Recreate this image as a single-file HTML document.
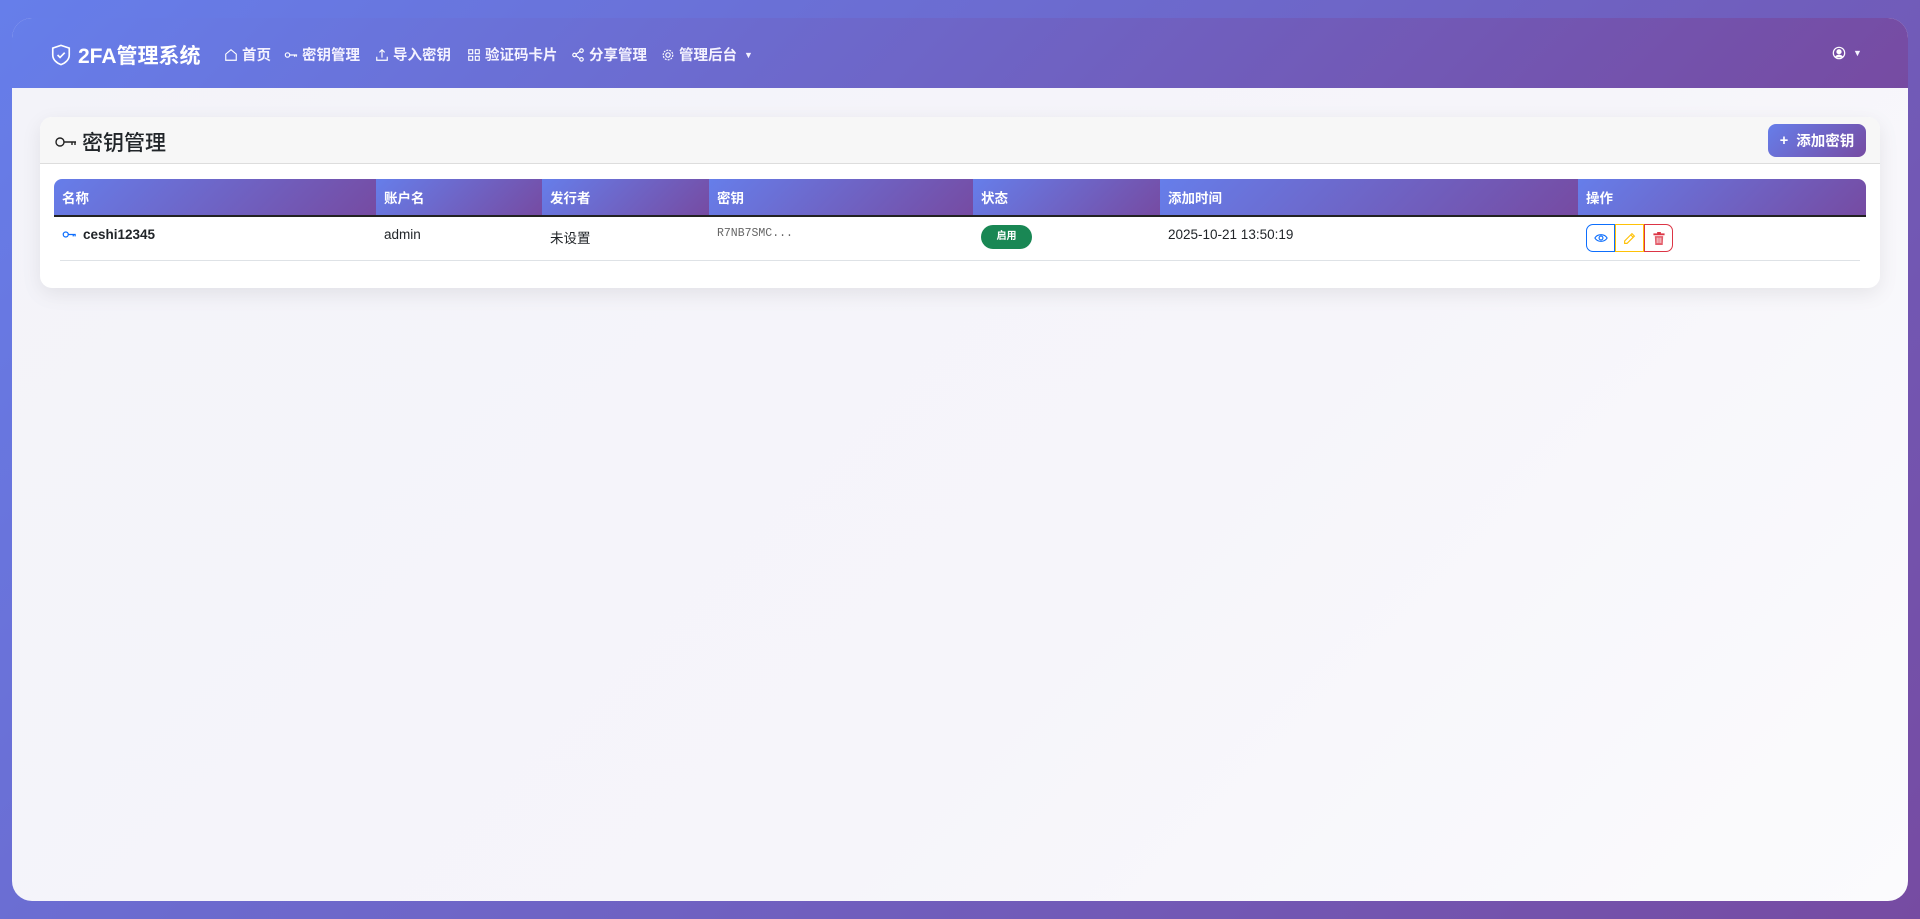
<!DOCTYPE html>
<html><head><meta charset="utf-8"><style>
*{box-sizing:border-box;margin:0;padding:0}
body{width:1920px;height:919px;overflow:hidden;background:linear-gradient(135deg,#667eea,#764ba2);font-family:"Liberation Sans","Noto Sans CJK SC",sans-serif;color:#212529}
.wrap{position:absolute;left:12px;top:18px;width:1896px;height:883px;border-radius:20px;overflow:hidden;background:linear-gradient(135deg,#f3f3f9,#f6f5fa 60%,#fbfbfd)}
.nav{height:70px;background:linear-gradient(135deg,#667eea,#764ba2);position:relative;color:#fff}
.brand{position:absolute;left:38px;top:22px;font-size:21px;font-weight:700;display:flex;align-items:center;gap:6px}
.item{position:absolute;top:26px;font-size:14.5px;font-weight:600;display:flex;align-items:center;gap:4px;color:#f4f2ff}
.item svg{width:14px;height:14px}
.card{position:absolute;left:28px;top:99px;width:1840px;height:171px;background:#fff;border-radius:12px;box-shadow:0 6px 20px rgba(0,0,0,.08);overflow:hidden}
.ch{height:47px;background:#f7f7f7;border-bottom:1px solid #ddd;position:relative}
.ch h2{position:absolute;left:14px;top:10px;font-size:21px;font-weight:500;display:flex;align-items:center;gap:4px}
.btn{position:absolute;right:14px;top:7px;width:98px;height:33px;border-radius:8px;background:linear-gradient(135deg,#667eea,#764ba2);color:#fff;font-size:14.5px;font-weight:700;display:flex;align-items:center;justify-content:center;gap:8px}
table{position:absolute;left:14px;top:62px;width:1812px;border-collapse:collapse;font-size:13.5px}
th{height:37px;text-align:left;color:#fff;font-weight:700;padding-left:8px;background:linear-gradient(135deg,#667eea,#764ba2);border-bottom:2px solid #222}
th:first-child{border-top-left-radius:8px}th:last-child{border-top-right-radius:8px}
td{height:44px;padding-left:8px;vertical-align:top;padding-top:10px}
.line{position:absolute;left:20px;top:143px;width:1800px;height:1px;background:#dee2e6}
.badge{display:inline-block;background:#198754;color:#fff;font-size:10px;font-weight:700;border-radius:12px;width:51px;height:24px;line-height:24px;text-align:center;margin-top:-3px}
.acts{display:flex;margin-top:-3px}
.acts span{width:29px;height:28px;border:1px solid;display:flex;align-items:center;justify-content:center}
</style></head><body>
<div class="wrap">
<div class="nav">
<div class="brand"><svg width="22" height="24" viewBox="0 0 16 16" fill="none" stroke="#fff" stroke-width="1.2"><path d="M8 1 L14 3 V8 C14 11.5 11 14 8 15 C5 14 2 11.5 2 8 V3 Z"/><path d="M5.5 8 L7.3 9.8 L10.7 6.3"/></svg>2FA管理系统</div>
<div class="item" style="left:212px"><svg viewBox="0 0 16 16" fill="none" stroke="#fff" stroke-width="1.3"><path d="M2 7 L8 2 L14 7 V14 H2 Z"/></svg>首页</div>
<div class="item" style="left:272px"><svg viewBox="0 0 16 16" fill="none" stroke="#fff" stroke-width="1.3"><circle cx="4" cy="8" r="2.5"/><path d="M6.5 8 H15 M12 8 V10 M14 8 V10"/></svg>密钥管理</div>
<div class="item" style="left:363px"><svg viewBox="0 0 16 16" fill="none" stroke="#fff" stroke-width="1.3"><path d="M2 10 V14 H14 V10 M8 11 V2 M5 5 L8 2 L11 5"/></svg>导入密钥</div>
<div class="item" style="left:455px"><svg viewBox="0 0 16 16" fill="none" stroke="#fff" stroke-width="1.3"><rect x="2" y="2" width="4.5" height="4.5"/><rect x="9.5" y="2" width="4.5" height="4.5"/><rect x="2" y="9.5" width="4.5" height="4.5"/><rect x="9.5" y="9.5" width="4.5" height="4.5"/></svg>验证码卡片</div>
<div class="item" style="left:559px"><svg viewBox="0 0 16 16" fill="none" stroke="#fff" stroke-width="1.3"><circle cx="12" cy="3" r="2"/><circle cx="4" cy="8" r="2"/><circle cx="12" cy="13" r="2"/><path d="M6 7 L10 4 M6 9 L10 12"/></svg>分享管理</div>
<div class="item" style="left:649px"><svg viewBox="0 0 16 16" fill="none" stroke="#fff" stroke-width="1.3"><circle cx="8" cy="8" r="2.5"/><circle cx="8" cy="8" r="5.5" stroke-dasharray="2.2 1.2"/></svg>管理后台 <span style="font-size:9px;margin-left:3px">▼</span></div>
<div class="item" style="left:1820px;top:28px"><svg viewBox="0 0 16 16" fill="none" stroke="#fff" stroke-width="1.4"><circle cx="8" cy="8" r="6.5"/><circle cx="8" cy="6.5" r="2.3" fill="#fff"/><path d="M4 13 C5 10 11 10 12 13" fill="#fff"/></svg><span style="font-size:9px;margin-left:3px">▼</span></div>
</div>
<div class="card">
<div class="ch"><h2><svg width="24" height="14" viewBox="0 0 24 14" fill="none" stroke="#222" stroke-width="1.4"><circle cx="6" cy="7" r="4"/><path d="M10 7 H22 M18 7 V10 M21 7 V10"/></svg>密钥管理</h2>
<div class="btn"><span>+</span>添加密钥</div></div>
<table>
<tr><th style="width:322px">名称</th><th style="width:166px">账户名</th><th style="width:167px">发行者</th><th style="width:264px">密钥</th><th style="width:187px">状态</th><th style="width:418px">添加时间</th><th>操作</th></tr>
<tr><td style="font-weight:700"><svg width="15" height="9" viewBox="0 0 24 14" fill="none" stroke="#0d6efd" stroke-width="2" style="margin-right:6px"><circle cx="6" cy="7" r="4"/><path d="M10 7 H22 M18 7 V10 M21 7 V10"/></svg>ceshi12345</td><td>admin</td><td>未设置</td><td style="font-family:'Liberation Mono',monospace;font-size:11.5px;color:#666">R7NB7SMC...</td><td><span class="badge">启用</span></td><td>2025-10-21 13:50:19</td>
<td><div class="acts">
<span style="border-color:#0d6efd;border-radius:7px 0 0 7px"><svg width="14" height="10" viewBox="0 0 16 10" fill="none" stroke="#0d6efd" stroke-width="1.3"><path d="M1 5 C4 0 12 0 15 5 C12 10 4 10 1 5 Z"/><circle cx="8" cy="5" r="2.2"/></svg></span>
<span style="border-color:#ffc107"><svg width="13" height="13" viewBox="0 0 16 16" fill="none" stroke="#ffc107" stroke-width="1.4"><path d="M11 2 L14 5 L5 14 H2 V11 Z M9.5 3.5 L12.5 6.5"/></svg></span>
<span style="border-color:#dc3545;border-radius:0 7px 7px 0"><svg width="12" height="13" viewBox="0 0 12 14" fill="#dc3545"><rect x="0" y="1.5" width="12" height="2"/><rect x="4" y="0" width="4" height="2"/><path d="M1.5 4.5 H10.5 L10 14 H2 Z" opacity=".8"/><path d="M4 6 V12 M6 6 V12 M8 6 V12" stroke="#fff" stroke-width=".8"/></svg></span>
</div></td></tr>
</table>
<div class="line"></div>
</div>
</div>
</body></html>
